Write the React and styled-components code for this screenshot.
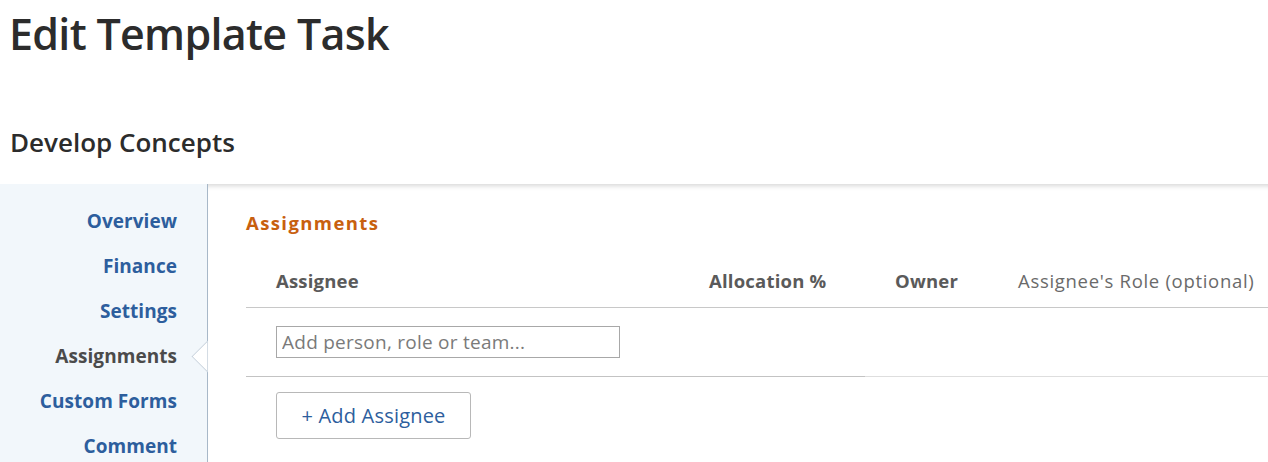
import React from "react";
import styled, { createGlobalStyle } from "styled-components";

const GlobalStyle = createGlobalStyle`
  body {
    margin: 0;
    background: #fff;
    font-family: "Open Sans", "Liberation Sans", sans-serif;
  }
`;

const navItems = ["Overview", "Finance", "Settings", "Assignments", "Custom Forms", "Comment"];

const columns = [
  { label: "Assignee", bold: true },
  { label: "Allocation %", bold: true },
  { label: "Owner", bold: true },
  { label: "Assignee's Role (optional)", bold: false },
];

const App = () => {
  return (
    <Page>
      <GlobalStyle />
      <Title>Edit Template Task</Title>
      <TaskName>Develop Concepts</TaskName>
      <Panel>
        <Sidebar>
          {navItems.map((item) => (
            <NavItem key={item} active={item === "Assignments"}>
              {item}
              {item === "Assignments" && <Notch />}
            </NavItem>
          ))}
        </Sidebar>
        <Content>
          <SectionTitle>Assignments</SectionTitle>
          <HeaderRow>
            {columns.map((col) => (
              <HeaderCell key={col.label} bold={col.bold}>
                {col.label}
              </HeaderCell>
            ))}
          </HeaderRow>
          <InputRow>
            <AssigneeInput placeholder="Add person, role or team..." />
          </InputRow>
          <Divider>
            <span className="dark" />
            <span className="light" />
          </Divider>
          <AddButton>+ Add Assignee</AddButton>
        </Content>
      </Panel>
    </Page>
  );
};

export default App;

const Page = styled.div`
  width: 1268px;
  height: 462px;
  overflow: hidden;
`;

const Title = styled.h1`
  margin: 0;
  padding: 4px 0 0 9px;
  font-family: "Open Sans", sans-serif;
  font-weight: 600;
  font-size: 43px;
  line-height: 60px;
  color: #2c2c2c;
  letter-spacing: -0.7px;
`;

const TaskName = styled.h2`
  margin: 58px 0 0;
  padding-left: 10px;
  font-family: "Open Sans", sans-serif;
  font-weight: 600;
  font-size: 26px;
  line-height: 40px;
  color: #2c2c2c;
  height: 62px;
`;

const Panel = styled.div`
  display: flex;
  height: 278px;
`;

const Sidebar = styled.nav`
  flex-shrink: 0;
  background: #f2f7fb;
  border-right: 1px solid #a8b8c8;
  padding: 15px 30px 0 0;
  box-sizing: border-box;
  width: 208px;
  display: flex;
  flex-direction: column;
  align-items: flex-end;
`;

const NavItem = styled.div`
  position: relative;
  height: 45px;
  line-height: 45px;
  font-size: 19px;
  font-weight: 700;
  letter-spacing: 0.05px;
  color: ${(props) => (props.active ? "#4b4b4b" : "#2d5e9d")};
  cursor: pointer;
`;

const Notch = styled.span`
  position: absolute;
  right: -42px;
  top: 11px;
  width: 22px;
  height: 22px;
  background: #fff;
  border-left: 1px solid #c3cfdb;
  border-bottom: 1px solid #c3cfdb;
  transform: rotate(45deg);
  clip-path: polygon(0 0, 100% 100%, 0 100%);
`;

const Content = styled.div`
  flex: 1;
  padding: 27px 0 0 38px;
  box-shadow: inset 0 6px 5px -4px rgba(0, 0, 0, 0.16);
`;

const SectionTitle = styled.div`
  font-size: 18.5px;
  font-weight: 700;
  line-height: 24px;
  letter-spacing: 1.4px;
  color: #c8600f;
`;

const HeaderRow = styled.div`
  display: grid;
  grid-template-columns: 463px 186px 123px 1fr;
  align-items: center;
  height: 53px;
  margin-top: 18px;
  padding-top: 1px;
  border-bottom: 1px solid #c8c8c8;
  & > :first-child {
    padding-left: 30px;
  }
`;

const HeaderCell = styled.div`
  font-size: 18.5px;
  font-weight: ${(props) => (props.bold ? 700 : 400)};
  letter-spacing: ${(props) => (props.bold ? "0.2px" : "0.7px")};
  color: ${(props) => (props.bold ? "#5a5a5a" : "#6a6a6a")};
  white-space: nowrap;
`;

const InputRow = styled.div`
  display: flex;
  align-items: center;
  height: 68px;
  padding-left: 30px;
`;

const AssigneeInput = styled.input`
  width: 344px;
  height: 32px;
  box-sizing: border-box;
  border: 1px solid #a8a8a8;
  border-radius: 0;
  padding: 0 5px;
  font-family: "Open Sans", sans-serif;
  font-size: 19px;
  letter-spacing: 0.25px;
  color: #333;
  outline: none;
  &::placeholder {
    color: #7a7a7a;
  }
`;

const Divider = styled.div`
  display: flex;
  height: 1px;
  .dark {
    width: 619px;
    background: #c3c3c3;
  }
  .light {
    flex: 1;
    background: #dedede;
  }
`;

const AddButton = styled.button`
  margin: 15px 0 0 30px;
  width: 195px;
  height: 47px;
  background: #fff;
  border: 1px solid #b8b8b8;
  border-radius: 3px;
  font-family: "Open Sans", sans-serif;
  font-size: 20px;
  letter-spacing: 0.2px;
  color: #2d5e9d;
  cursor: pointer;
`;
